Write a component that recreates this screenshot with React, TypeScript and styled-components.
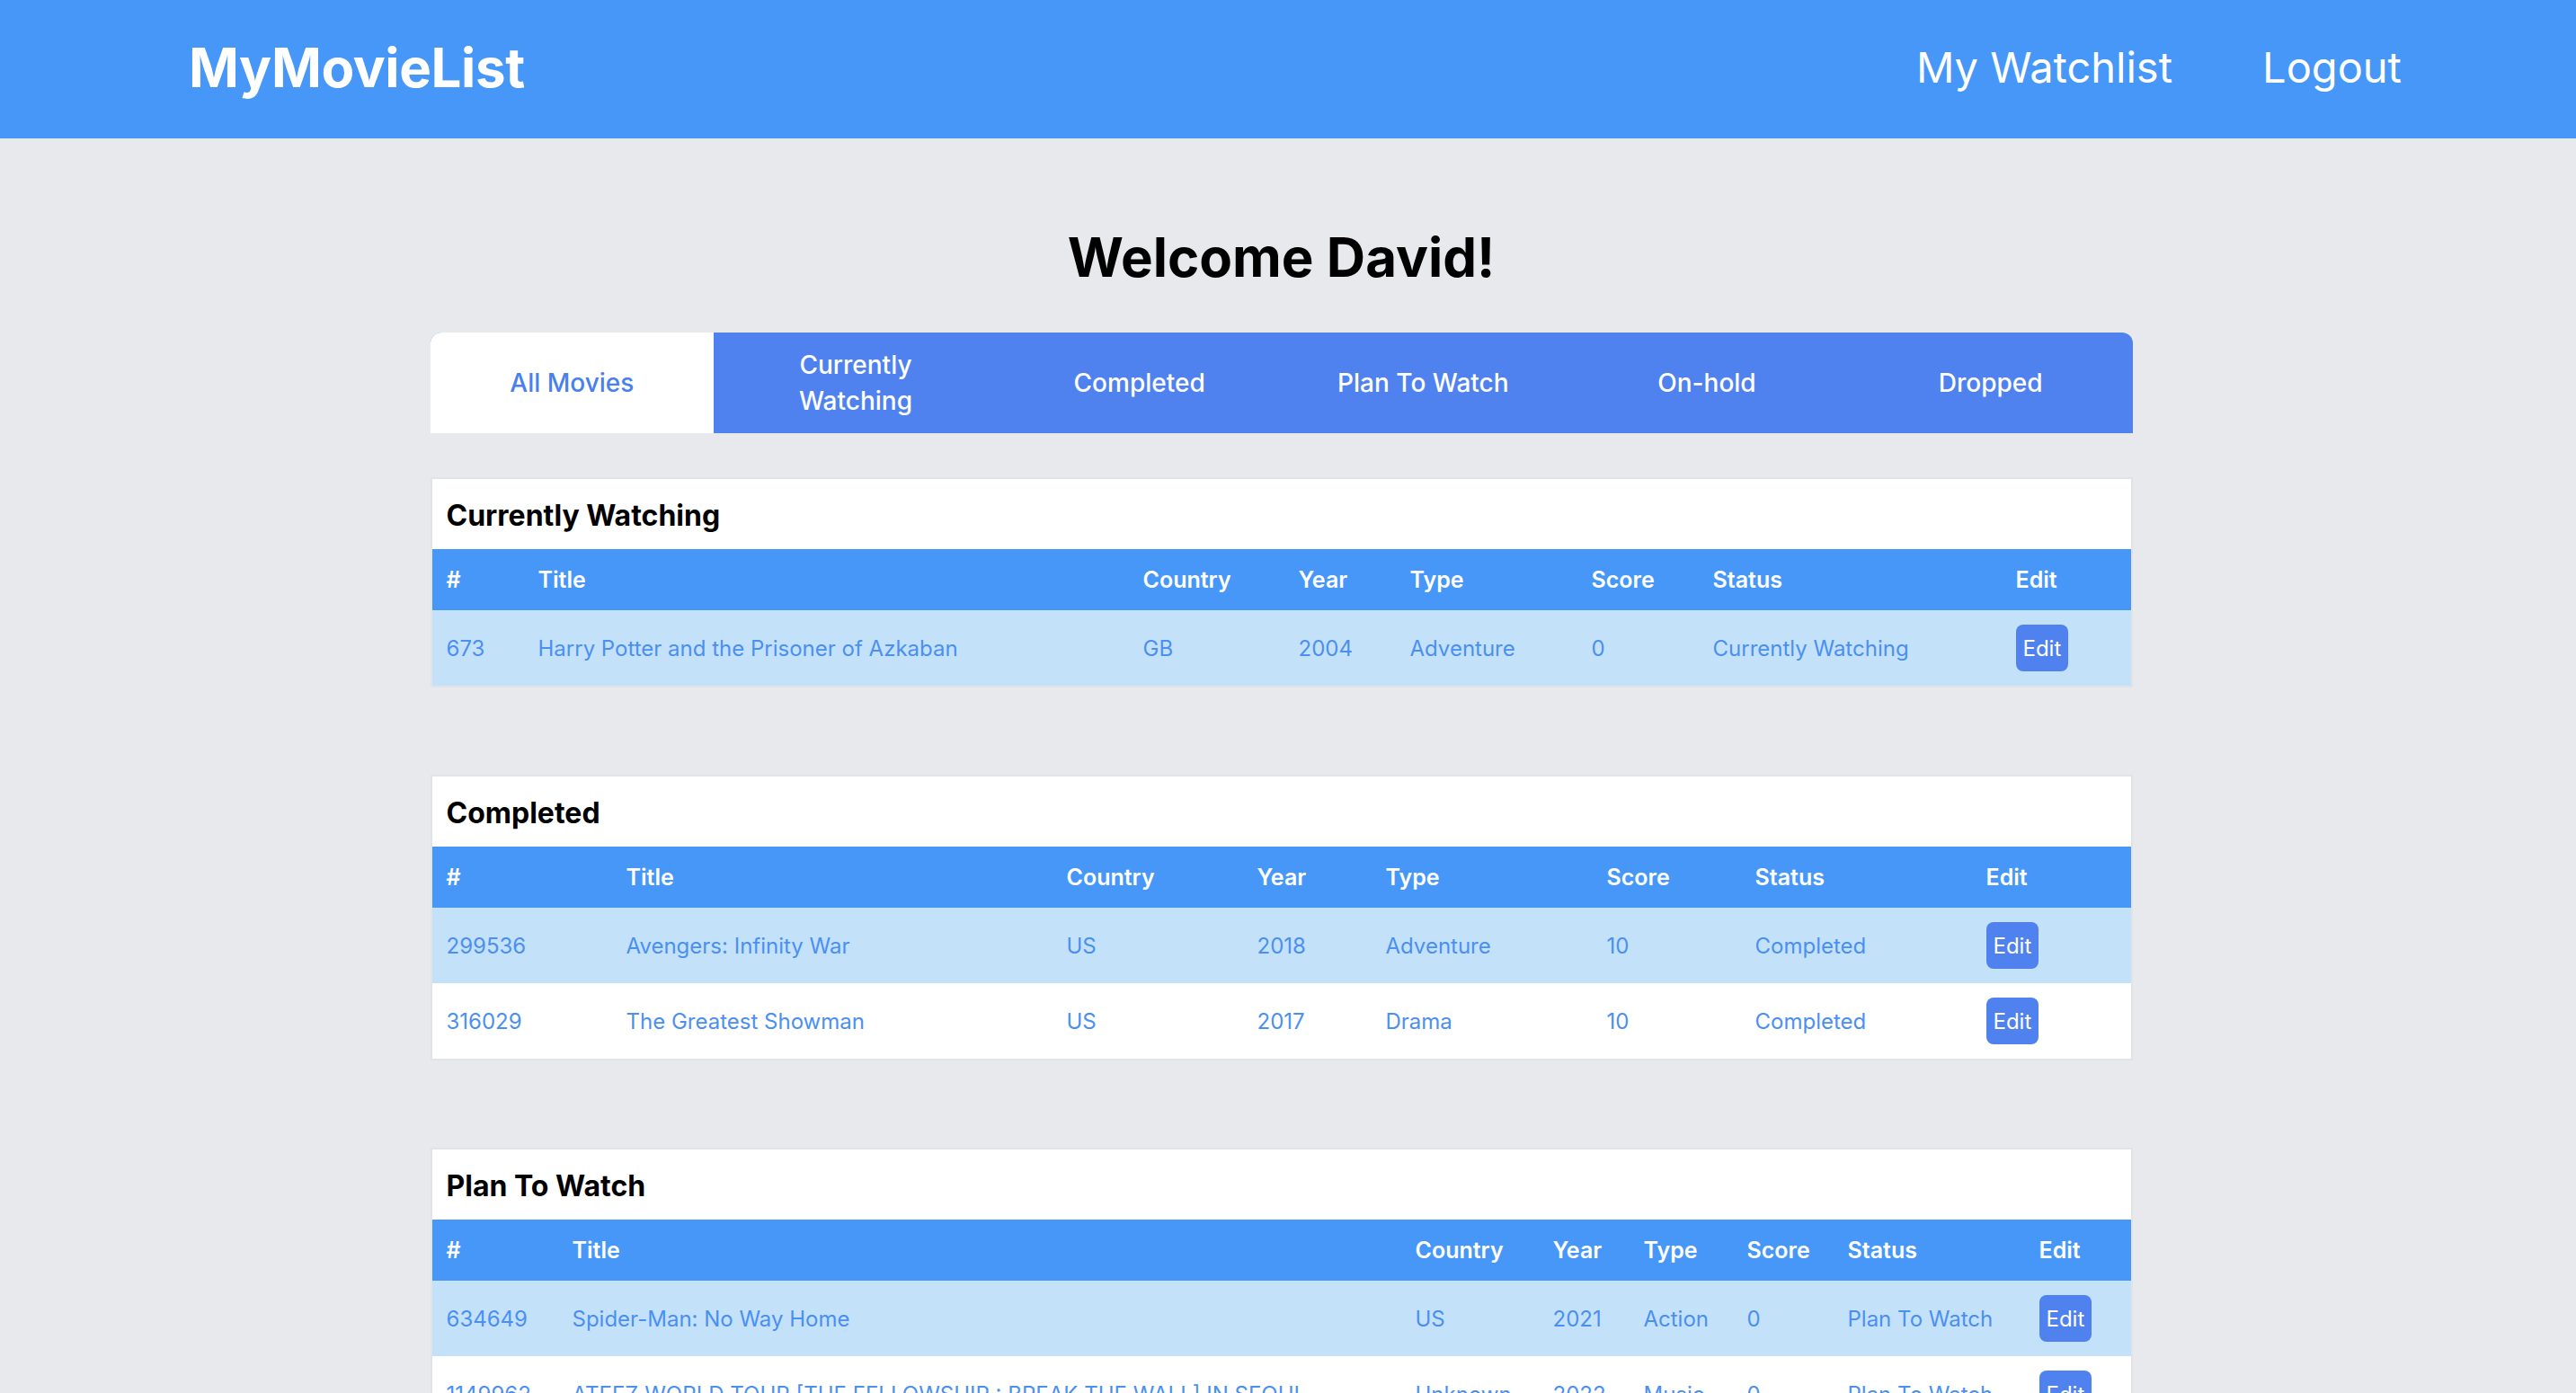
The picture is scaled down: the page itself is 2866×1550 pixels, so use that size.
import React from "react";
import styled, { createGlobalStyle } from "styled-components";

const GlobalStyle = createGlobalStyle`
  html, body {
    margin: 0;
    padding: 0;
    background: #e8e9ed;
    font-family: Inter, "Noto Sans", "Liberation Sans", sans-serif;
  }
  * { box-sizing: border-box; }
`;

const Header = styled.header`
  height: 154px;
  background: #4697f8;
  display: flex;
  align-items: center;
  justify-content: space-between;
  padding: 0 194px 5px 210px;
`;

const Logo = styled.div`
  color: #fff;
  font-weight: 700;
  font-size: 60px;
  letter-spacing: -0.4px;
`;

const Nav = styled.nav`
  display: flex;
  gap: 100px;
`;

const NavLink = styled.a`
  color: #fff;
  font-size: 47px;
  font-weight: 400;
  text-decoration: none;
`;

const Main = styled.main`
  padding: 0 15px 60px 0;
`;

const Content = styled.div`
  width: 1894px;
  margin: 0 auto;
  display: flex;
  flex-direction: column;
`;

const Welcome = styled.h1`
  margin: 95px 0 46px;
  text-align: center;
  font-size: 60px;
  line-height: 75px;
  font-weight: 700;
  color: #000;
`;

const TabBar = styled.div`
  display: grid;
  grid-template-columns: repeat(6, 1fr);
  height: 112px;
  background: #4f82ee;
  border-radius: 12px 12px 0 0;
  overflow: hidden;
  margin-bottom: 49px;
`;

const Tab = styled.button<{ $active?: boolean }>`
  border: none;
  margin: 0;
  padding: 0 40px;
  background: ${(p) => (p.$active ? "#fff" : "transparent")};
  color: ${(p) => (p.$active ? "#4a7fee" : "#fff")};
  font-family: inherit;
  font-size: 28px;
  line-height: 40px;
  font-weight: 500;
  text-align: center;
  cursor: pointer;
`;

const Sections = styled.div`
  display: flex;
  flex-direction: column;
  gap: 97px;
`;

const Card = styled.section`
  background: #fff;
  border: 2px solid #e1e3e7;
`;

const CardTitle = styled.h2`
  margin: 0;
  height: 78px;
  display: flex;
  align-items: center;
  padding: 2px 16px 0;
  font-size: 32px;
  font-weight: 700;
  color: #000;
`;

const Table = styled.table`
  width: 100%;
  border-collapse: collapse;
  table-layout: fixed;
`;

const Col = styled.col<{ $w: number }>`
  width: ${(p) => p.$w}px;
`;

const Th = styled.th`
  height: 68px;
  padding: 0 16px;
  text-align: left;
  background: #4697f8;
  color: #fff;
  font-size: 25px;
  font-weight: 600;
  white-space: nowrap;
`;

const Row = styled.tr<{ $shaded: boolean }>`
  background: ${(p) => (p.$shaded ? "#c4e1fa" : "#fff")};
`;

const Td = styled.td`
  height: 84px;
  padding: 0 16px;
  color: #4b90f0;
  font-size: 24px;
  font-weight: 400;
  white-space: nowrap;
`;

const EditButton = styled.button`
  height: 52px;
  padding: 0 8px;
  border: none;
  border-radius: 8px;
  background: #4f82ee;
  color: #fff;
  font-family: inherit;
  font-size: 24px;
  cursor: pointer;
`;

type Movie = {
  id: string;
  title: string;
  country: string;
  year: string;
  type: string;
  score: string;
  status: string;
};

type SectionData = {
  name: string;
  widths: number[];
  movies: Movie[];
};

const sections: SectionData[] = [
  {
    name: "Currently Watching",
    widths: [102, 673, 173, 124, 202, 135, 337, 144],
    movies: [
      {
        id: "673",
        title: "Harry Potter and the Prisoner of Azkaban",
        country: "GB",
        year: "2004",
        type: "Adventure",
        score: "0",
        status: "Currently Watching",
      },
    ],
  },
  {
    name: "Completed",
    widths: [200, 490, 212, 143, 246, 165, 257, 177],
    movies: [
      {
        id: "299536",
        title: "Avengers: Infinity War",
        country: "US",
        year: "2018",
        type: "Adventure",
        score: "10",
        status: "Completed",
      },
      {
        id: "316029",
        title: "The Greatest Showman",
        country: "US",
        year: "2017",
        type: "Drama",
        score: "10",
        status: "Completed",
      },
    ],
  },
  {
    name: "Plan To Watch",
    widths: [140, 938, 153, 101, 115, 112, 213, 118],
    movies: [
      {
        id: "634649",
        title: "Spider-Man: No Way Home",
        country: "US",
        year: "2021",
        type: "Action",
        score: "0",
        status: "Plan To Watch",
      },
      {
        id: "1149962",
        title: "ATEEZ WORLD TOUR [THE FELLOWSHIP : BREAK THE WALL] IN SEOUL",
        country: "Unknown",
        year: "2022",
        type: "Music",
        score: "0",
        status: "Plan To Watch",
      },
    ],
  },
];

const headers = ["#", "Title", "Country", "Year", "Type", "Score", "Status", "Edit"];
const tabs = ["All Movies", "Currently Watching", "Completed", "Plan To Watch", "On-hold", "Dropped"];

export default function App() {
  return (
    <>
      <GlobalStyle />
      <Header>
        <Logo>MyMovieList</Logo>
        <Nav>
          <NavLink href="#">My Watchlist</NavLink>
          <NavLink href="#">Logout</NavLink>
        </Nav>
      </Header>
      <Main>
        <Content>
          <Welcome>Welcome David!</Welcome>
          <TabBar>
            {tabs.map((t, i) => (
              <Tab key={t} $active={i === 0}>
                {t}
              </Tab>
            ))}
          </TabBar>
          <Sections>
            {sections.map((s) => (
              <Card key={s.name}>
                <CardTitle>{s.name}</CardTitle>
                <Table>
                  <colgroup>
                    {s.widths.map((w, i) => (
                      <Col key={i} $w={w} />
                    ))}
                  </colgroup>
                  <thead>
                    <tr>
                      {headers.map((h) => (
                        <Th key={h}>{h}</Th>
                      ))}
                    </tr>
                  </thead>
                  <tbody>
                    {s.movies.map((m, i) => (
                      <Row key={m.id} $shaded={i % 2 === 0}>
                        <Td>{m.id}</Td>
                        <Td>{m.title}</Td>
                        <Td>{m.country}</Td>
                        <Td>{m.year}</Td>
                        <Td>{m.type}</Td>
                        <Td>{m.score}</Td>
                        <Td>{m.status}</Td>
                        <Td>
                          <EditButton>Edit</EditButton>
                        </Td>
                      </Row>
                    ))}
                  </tbody>
                </Table>
              </Card>
            ))}
          </Sections>
        </Content>
      </Main>
    </>
  );
}
